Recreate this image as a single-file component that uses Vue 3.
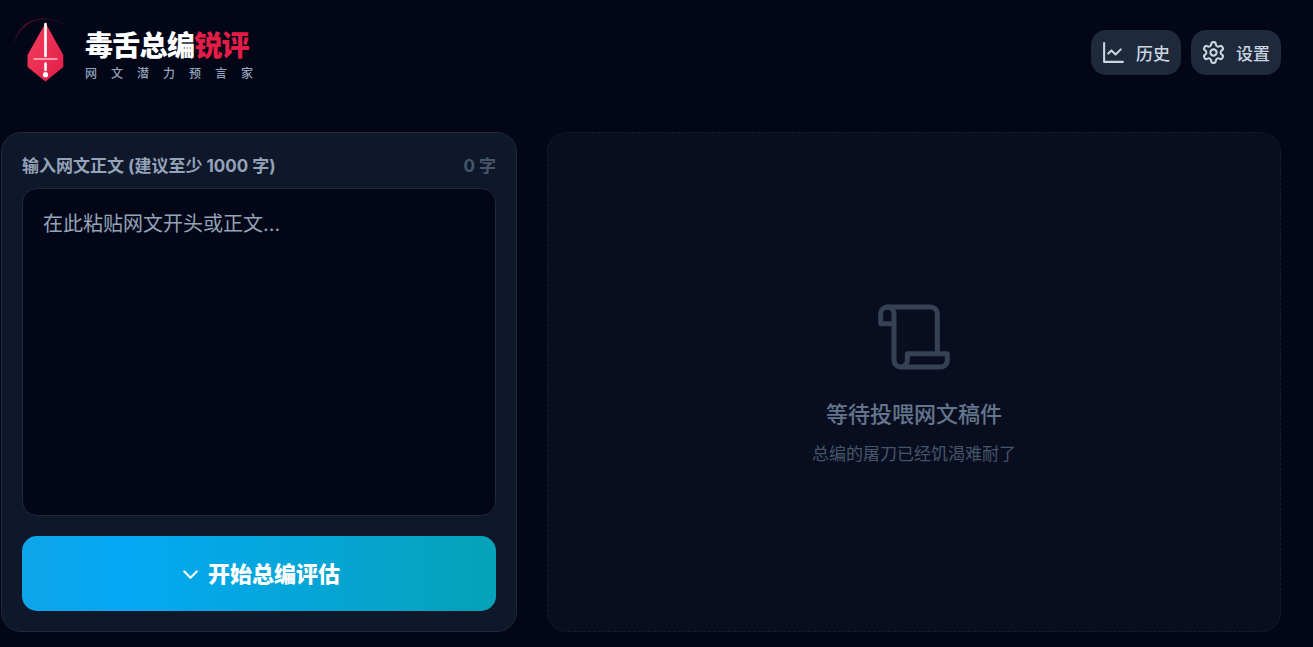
<script setup>
import { computed, ref } from 'vue'

const text = ref('')
const count = computed(() => text.value.replace(/\s/g, '').length)
</script>

<template>
  <div class="page">
    <header class="header">
      <div class="brand">
        <svg class="logo" viewBox="0 0 70 80" aria-hidden="true">
          <defs>
            <linearGradient id="blade" x1="0" y1="0" x2="1" y2="1">
              <stop offset="0" stop-color="#f43f5e" />
              <stop offset="1" stop-color="#e11d48" />
            </linearGradient>
            <linearGradient id="arc" x1="0" y1="1" x2="1" y2="0">
              <stop offset="0" stop-color="#e11d48" stop-opacity="0" />
              <stop offset="0.5" stop-color="#e11d48" stop-opacity="0.42" />
              <stop offset="1" stop-color="#e11d48" stop-opacity="0" />
            </linearGradient>
          </defs>
          <path d="M4 36C6 20 18 9 34 9C42 9 49 11 54 14" fill="none" stroke="url(#arc)" stroke-width="1.5" />
          <path d="M35.5 13L53.3 45V57L35.5 71.5L17.5 57V45Z" fill="url(#blade)" />
          <path d="M35.5 14V46M35.5 53.5V60" stroke="#fff" stroke-width="2.6" stroke-linecap="round" />
          <path d="M23.5 49H47.5" stroke="#fff" stroke-opacity="0.65" stroke-width="1.6" />
          <circle cx="35.5" cy="64.7" r="2.6" fill="#fff" />
        </svg>
        <div class="wordmark">
          <h1 class="title">毒舌总编<span class="accent">锐评</span></h1>
          <p class="tagline">网文潜力预言家</p>
        </div>
      </div>
      <nav class="actions">
        <button type="button" class="action">
          <svg class="icon" viewBox="0 0 24 24" aria-hidden="true">
            <path d="M3 3v18h18" />
            <path d="m19 9-5 5-4-4-3 3" />
          </svg>
          历史
        </button>
        <button type="button" class="action">
          <svg class="icon" viewBox="0 0 24 24" aria-hidden="true">
            <path d="M12.22 2h-.44a2 2 0 0 0-2 2v.18a2 2 0 0 1-1 1.73l-.43.25a2 2 0 0 1-2 0l-.15-.08a2 2 0 0 0-2.73.73l-.22.38a2 2 0 0 0 .73 2.73l.15.1a2 2 0 0 1 1 1.72v.51a2 2 0 0 1-1 1.74l-.15.09a2 2 0 0 0-.73 2.73l.22.38a2 2 0 0 0 2.73.73l.15-.08a2 2 0 0 1 2 0l.43.25a2 2 0 0 1 1 1.73V20a2 2 0 0 0 2 2h.44a2 2 0 0 0 2-2v-.18a2 2 0 0 1 1-1.73l.43-.25a2 2 0 0 1 2 0l.15.08a2 2 0 0 0 2.73-.73l.22-.39a2 2 0 0 0-.73-2.73l-.15-.08a2 2 0 0 1-1-1.74v-.5a2 2 0 0 1 1-1.74l.15-.09a2 2 0 0 0 .73-2.73l-.22-.38a2 2 0 0 0-2.73-.73l-.15.08a2 2 0 0 1-2 0l-.43-.25a2 2 0 0 1-1-1.73V4a2 2 0 0 0-2-2z" />
            <circle cx="12" cy="12" r="3" />
          </svg>
          设置
        </button>
      </nav>
    </header>

    <main class="grid">
      <section class="panel">
        <div class="field-head">
          <label for="manuscript">输入网文正文 (建议至少 1000 字)</label>
          <span class="count">{{ count }} 字</span>
        </div>
        <textarea id="manuscript" v-model="text" class="manuscript" placeholder="在此粘贴网文开头或正文..."></textarea>
        <button type="button" class="submit">
          <svg class="icon" viewBox="0 0 24 24" aria-hidden="true"><path d="m6 10 6 6 6-6" /></svg>
          <span class="submit-text">开始总编评估</span>
        </button>
      </section>

      <section class="empty">
        <svg class="scroll" viewBox="0 0 24 24" aria-hidden="true">
          <path d="M8 21h12a2 2 0 0 0 2-2v-2H10v2a2 2 0 1 1-4 0V5a2 2 0 1 0-4 0v3h4" />
          <path d="M19 17V5a2 2 0 0 0-2-2H4" />
        </svg>
        <h2 class="empty-title">等待投喂网文稿件</h2>
        <p class="empty-note">总编的屠刀已经饥渴难耐了</p>
      </section>
    </main>
  </div>
</template>

<style>
body {
  margin: 0;
  background: #020617;
}
</style>

<style scoped>
.page {
  box-sizing: border-box;
  display: flex;
  flex-direction: column;
  min-height: 100vh;
  padding: 10px 32px 15px 1px;
  background: #020617;
  color: #e2e8f0;
  font-family: Inter, "Noto Sans CJK SC", sans-serif;
}

.header {
  display: flex;
  align-items: flex-start;
  justify-content: space-between;
  margin-bottom: 42px;
}

.brand {
  display: flex;
  align-items: center;
  gap: 5px;
  padding-left: 9px;
}

.logo {
  width: 70px;
  height: 80px;
}

.wordmark {
  padding-top: 12px;
}

.title {
  margin: 0;
  color: #fff;
  font-size: 28px;
  font-weight: 900;
  line-height: 36px;
  letter-spacing: -0.025em;
}

.accent {
  color: #e11d48;
}

.tagline {
  margin: 0;
  color: #94a3b8;
  font-size: 12px;
  font-weight: 500;
  line-height: 20px;
  letter-spacing: 14px;
}

.actions {
  display: flex;
  gap: 10px;
  padding-top: 20px;
}

.action {
  display: flex;
  align-items: center;
  gap: 10px;
  min-width: 90px;
  height: 45px;
  padding: 0 10px 1px;
  border: 0;
  border-radius: 15px;
  background: #1e293b;
  color: #cbd5e1;
  font: inherit;
  font-size: 17px;
  font-weight: 500;
}

.icon {
  width: 25px;
  height: 25px;
  fill: none;
  stroke: currentColor;
  stroke-width: 2;
  stroke-linecap: round;
  stroke-linejoin: round;
}

.grid {
  flex: 1;
  display: grid;
  grid-template-columns: 516fr 734fr;
  gap: 30px;
}

.panel {
  display: flex;
  flex-direction: column;
  padding: 20px;
  border: 1px solid #1e293b;
  border-radius: 20px;
  background: #0f172a;
}

.field-head {
  display: flex;
  justify-content: space-between;
  padding-top: 1px;
  margin-bottom: 9px;
  color: #94a3b8;
  font-size: 17px;
  font-weight: 700;
  line-height: 25px;
}

.count {
  color: #475569;
}

.manuscript {
  box-sizing: border-box;
  flex: 1;
  width: 100%;
  min-height: 200px;
  margin: 0 0 20px;
  padding: 19px 20px;
  border: 1px solid #1e293b;
  border-radius: 15px;
  background: #020617;
  color: #e2e8f0;
  font: inherit;
  font-size: 20px;
  line-height: 32px;
  resize: none;
}

.manuscript::placeholder {
  color: #94a3b8;
}

.submit {
  display: flex;
  align-items: center;
  justify-content: center;
  gap: 5px;
  height: 75px;
  border: 0;
  border-radius: 15px;
  background: linear-gradient(90deg, #0ea5e9, #03a9f4 22%, #06a2b8);
  color: #fff;
  font: inherit;
  font-size: 22px;
  font-weight: 900;
}

.submit-text {
  padding-bottom: 4px;
}

.empty {
  display: flex;
  flex-direction: column;
  align-items: center;
  justify-content: center;
  border: 1px dashed #171e30;
  border-radius: 20px;
  background: #080e20;
}

.scroll {
  width: 80px;
  height: 80px;
  margin-bottom: 20px;
  fill: none;
  stroke: #364156;
  stroke-width: 1.5;
  stroke-linecap: round;
  stroke-linejoin: round;
}

.empty-title {
  margin: 0 0 10px;
  color: #64748b;
  font-size: 22px;
  font-weight: 500;
  line-height: 35px;
}

.empty-note {
  margin: 0;
  color: #475569;
  font-size: 17px;
  line-height: 25px;
}
</style>
